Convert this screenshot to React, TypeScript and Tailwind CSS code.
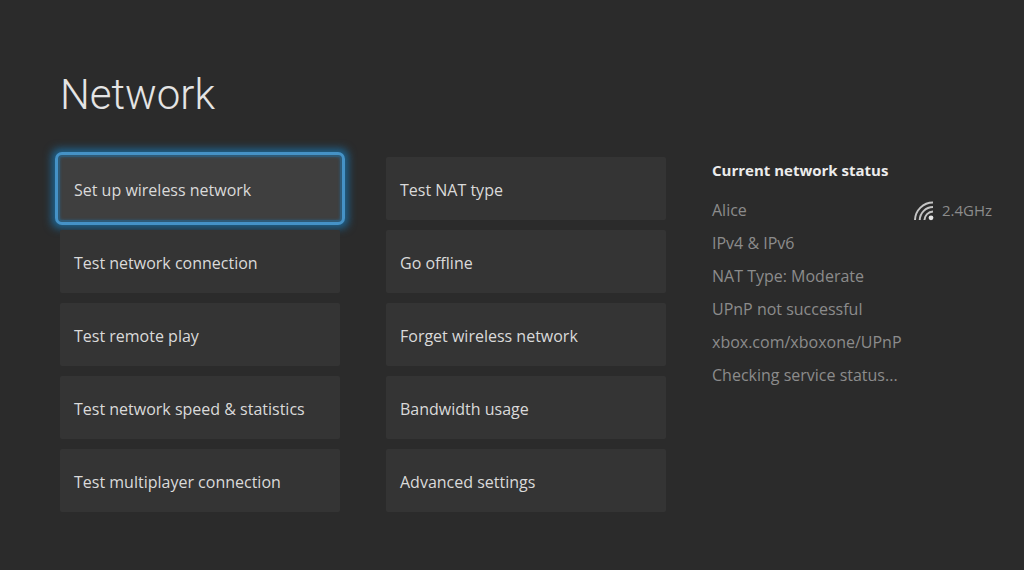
import React from "react";

const columns = [
  [
    "Set up wireless network",
    "Test network connection",
    "Test remote play",
    "Test network speed & statistics",
    "Test multiplayer connection",
  ],
  [
    "Test NAT type",
    "Go offline",
    "Forget wireless network",
    "Bandwidth usage",
    "Advanced settings",
  ],
];

const statusLines = [
  "IPv4 & IPv6",
  "NAT Type: Moderate",
  "UPnP not successful",
  "xbox.com/xboxone/UPnP",
  "Checking service status...",
];

function Tile({ label, active }: { label: string; active: boolean }) {
  return (
    <button
      type="button"
      className={
        "h-[63px] w-full rounded-xs px-3.5 pt-0.5 text-left text-base text-[#dadada] " +
        (active
          ? "bg-[#3f3f3f] outline-3 outline-offset-2 outline-[#4592c6] shadow-[0_0_0_2px_#2f5a76,0_0_8px_8px_#1d6796,inset_0_0_3px_0_#2f5a76]"
          : "bg-[#343434]")
      }
    >
      {label}
    </button>
  );
}

function SignalIcon() {
  return (
    <svg viewBox="0 0 20 20" className="size-5" fill="none" stroke="#c4c4c4" strokeWidth="2" aria-hidden="true">
      <path d="M1 19A18 18 0 0 1 19 1.500M5.700 19A13.500 13.500 0 0 1 19 6M10.400 19A9 9 0 0 1 19 10.500" />
      <circle cx="17" cy="16.800" r="2.400" fill="#e4e4e4" stroke="none" />
    </svg>
  );
}

export default function App() {
  return (
    <main className="min-h-screen bg-[#2b2b2b] pt-[70px] pr-8 pl-[60px] font-['Open_Sans','Noto_Sans',sans-serif]">
      <h1 className="font-['Roboto',sans-serif] text-[42px] leading-[50px] font-light text-[#e4e4e4]">Network</h1>
      <div className="mt-[37px] flex">
        <div className="grid flex-[606] grid-cols-2 gap-x-[46px]">
          {columns.map((items, c) => (
            <div key={c} className="flex flex-col gap-2.5">
              {items.map((label, i) => (
                <Tile key={label} label={label} active={c === 0 && i === 0} />
              ))}
            </div>
          ))}
        </div>
        <section className="ml-[46px] flex-[280] text-base leading-[33px] text-[#8c8c8c]">
          <h2 className="mt-1 mb-[15px] text-[15px] leading-[18px] font-bold text-[#ececec]">
            Current network status
          </h2>
          <div className="flex items-center justify-between">
            <span>Alice</span>
            <span className="flex items-center gap-2 text-[15px]">
              <SignalIcon />
              2.4GHz
            </span>
          </div>
          {statusLines.map((line) => (
            <p key={line}>{line}</p>
          ))}
        </section>
      </div>
    </main>
  );
}
